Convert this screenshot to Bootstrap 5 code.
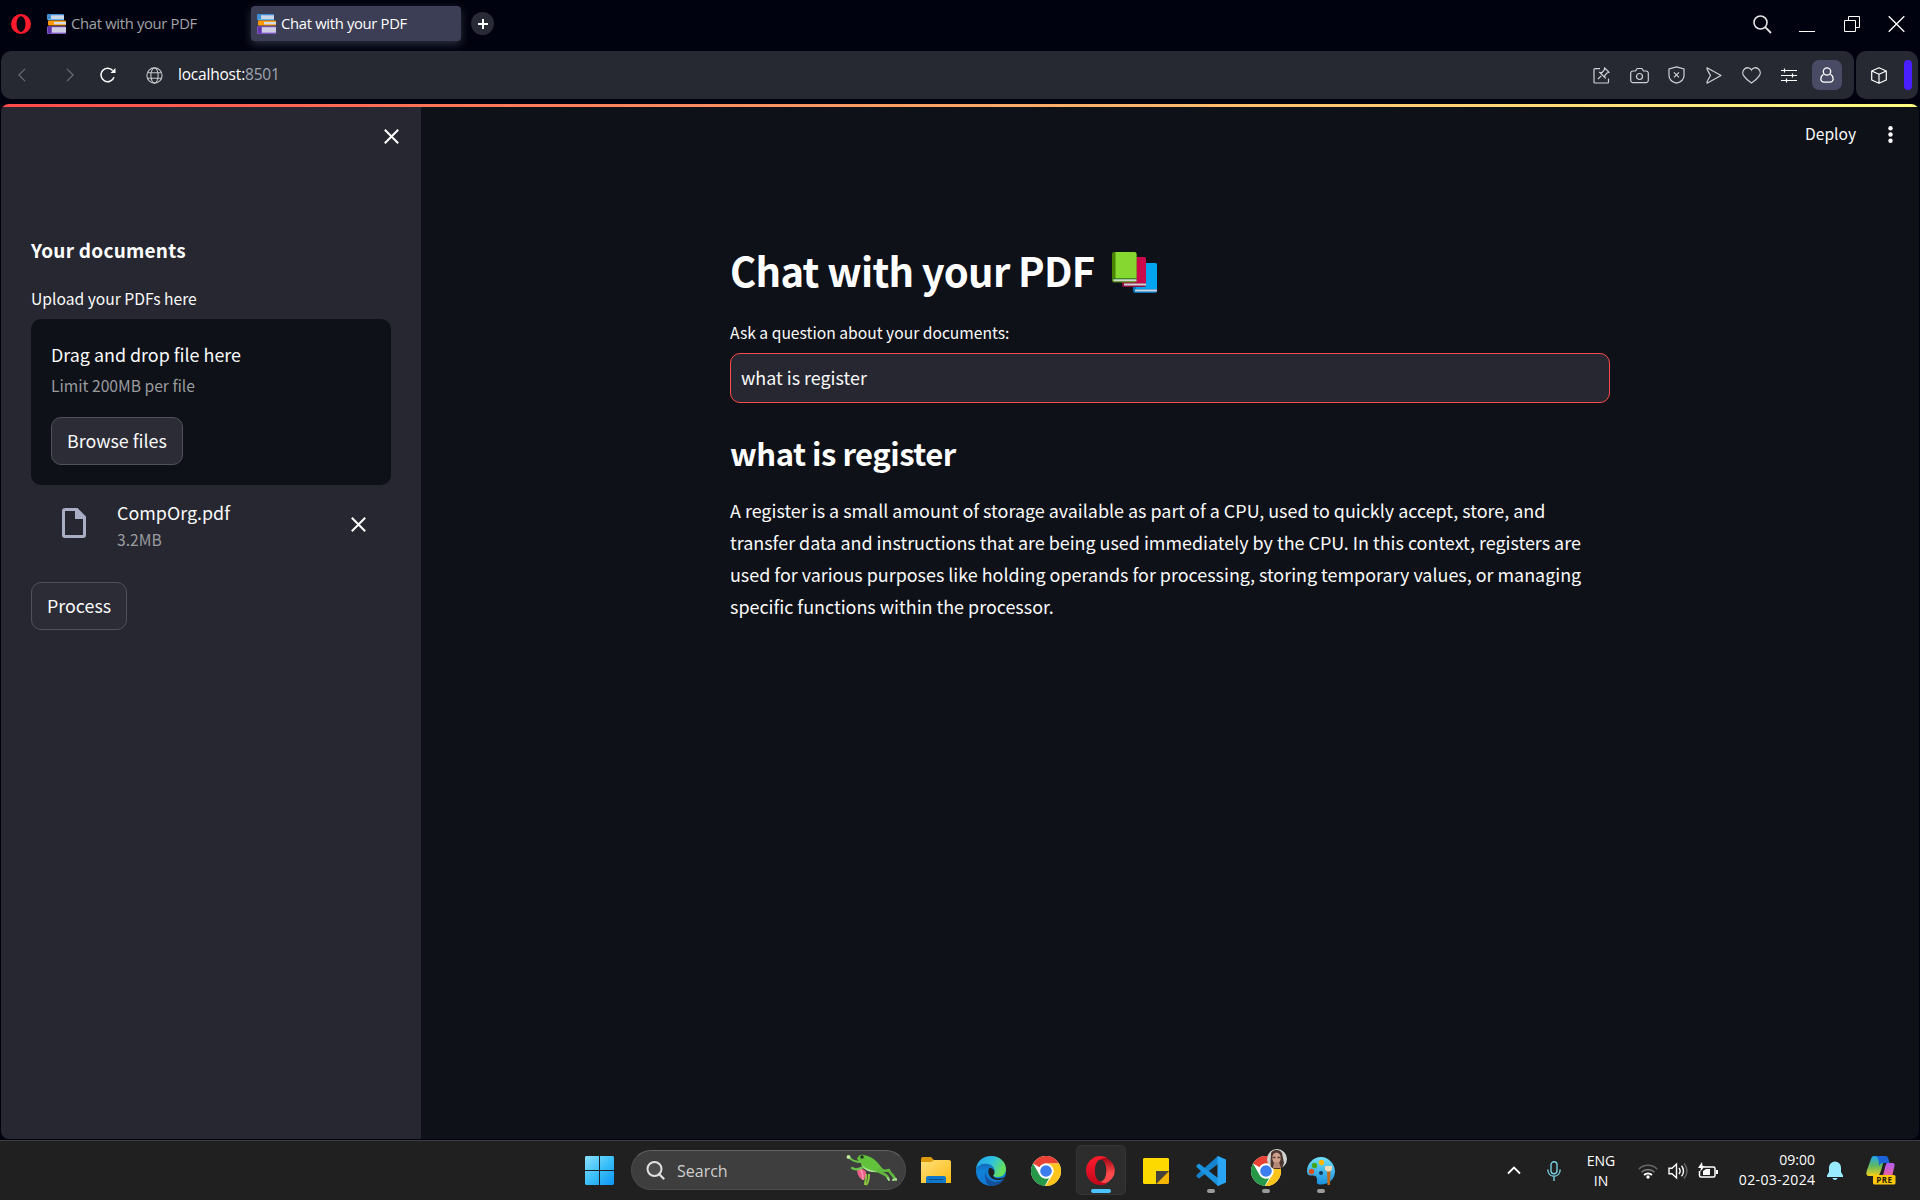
<!DOCTYPE html>
<html lang="en" data-bs-theme="dark">
<head>
<meta charset="utf-8">
<title>Chat with your PDF</title>
<meta name="viewport" content="width=device-width, initial-scale=1">
<link href="https://cdn.jsdelivr.net/npm/bootstrap@5.3.0/dist/css/bootstrap.min.css" rel="stylesheet">
<style>
  html, body { height: 100%; }
  body { background: #00030f; color: #fafafa; overflow: hidden; font-family: "Noto Sans CJK SC", "Noto Sans", sans-serif; }
  svg { display: block; flex: none; }
  .ui { font-family: "Open Sans", "Noto Sans", sans-serif; white-space: nowrap; }
  .tabstrip { height: 51px; padding: 0 15px 0 11px; }
  .o-logo { margin-top: 14px; }
  .tab-item { height: 35px; width: 210px; margin-top: 6px; padding-left: 6px; gap: 5px; font-size: 14.8px; line-height: 26px; border-radius: 4px; color: #a3a4a9; }
  .tab-item:not(.current) { margin-left: 10px; }
  .tab-item span { letter-spacing: -.32px; padding-bottom: 1px; }
  .tab-item.current { background: #3c3e55; color: #fff; box-shadow: 0 3px 9px rgba(90,92,110,.5); }
  .plus { width: 23px; height: 23px; margin: 12px 0 0 10px; background: #282a35; }
  .win-ctl { margin-top: 15px; gap: 27.5px; }
  .bars { padding: 0 2px 0 1px; gap: 2px; }
  .panel { background: #262932; border-radius: 10px; height: 48px; }
  .nav-panel { padding: 0 8.500px 0 17px; }
  .ext-panel { width: 62px; padding: 0 6px 0 15px; }
  .ext-bar { width: 8px; height: 30px; background: #4a1fff; }
  .addr { font-size: 15.500px; margin-left: 15px; letter-spacing: -.2px; }
  .addr .port { color: #9fa5b3; }
  .slot { width: 37.5px; }
  .user-box { width: 30px; height: 30px; background: #494b64; border-radius: 7px; }
  .viewport { margin: 5px 1px 0; height: 1035px; border-radius: 8px; background: #0e1118; overflow: hidden; }
  .rainbow { height: 3px; background: linear-gradient(90deg, #ff4b4b, #fffd80); }
  .side { width: 420px; background: #262730; padding: 22px 30px 0; }
  .side-close { margin-right: -8px; }
  .side h2 { font-size: 19px; line-height: 24px; font-weight: 700; margin: 94px 0 26px; letter-spacing: .25px; }
  .lbl { font-size: 15.65px; line-height: 20px; padding-top: 1px; margin-bottom: -1px; }
  .t-body { font-size: 17.9px; line-height: 24px; }
  .muted-txt { color: #9a9b9f; }
  .dropzone { margin-top: 11px; height: 166px; padding: 23px 20px 0; background: #0e1118; border-radius: 10px; }
  .btn-st { height: 48px; padding: 0 15px 2px; font-size: 17.85px; line-height: 24px; color: #fafafa; background: #2b2c36; border: 1px solid #50515a; border-radius: 10px; }
  .file-row { margin-top: 15px; height: 49px; padding: 0 25px 0 31px; }
  .main-col { width: 880px; margin-left: 309px; padding-top: 136px; }
  .main-col h1 { font-size: 40px; line-height: 54px; font-weight: 700; margin: 0 0 25px; letter-spacing: -.7px; }
  .books { margin: 5px 0 0 17px; }
  .main-col h3 { font-size: 31px; line-height: 38px; font-weight: 700; margin: 31px 0 22px; letter-spacing: -.48px; }
  .main-col p { font-size: 17.91px; line-height: 32px; margin: 0; }
  .form-control.ask { height: 50px; margin-top: 11px; padding: 0 10px 2px; background: #262730; border: 1px solid #ff4b4b; border-radius: 10px; color: #fafafa; font-size: 17.9px; }
  .top-right { width: 114px; padding: 16px 26px 0 0; }
  .taskbar { height: 60px; margin-top: 1px; background: #202020; border-top: 1px solid #3e3e42; padding-left: 572px; }
  .app { width: 55px; height: 59px; position: relative; }
  .app.running::after { content: ""; position: absolute; left: 24px; bottom: 7px; width: 8px; height: 4px; border-radius: 2px; background: #9a9a9a; }
  .app.active-app::before { content: ""; position: absolute; left: 2.5px; top: 4px; width: 50px; height: 50px; border-radius: 5px; background: #2d2d2d; border: 1px solid #353535; }
  .app.active-app::after { content: ""; position: absolute; left: 17.5px; bottom: 7px; width: 20px; height: 4px; border-radius: 2px; background: #4cc2ff; }
  .app svg { position: relative; }
  .app .avatar { position: absolute; left: 28.5px; top: 8px; }
  .searchbox { width: 275px; height: 40px; margin: 0 2px 1px 4px; border-radius: 20px; background: #3e3e3e; border: 1px solid #4b4b4b; border-top-color: #636363; padding: 0 7px 0 14px; }
  .searchbox span { font-size: 16px; margin: 2px 0 0 12px; color: #cfcfcf; }
  .tray { font-size: 14px; line-height: 20px; color: #fff; padding-right: 24px; }
  .lang { margin: 0 22px 0 25px; width: 30px; }
  .clock { margin: -1px 0 0 20px; width: 77px; }
  .clock .date { letter-spacing: .35px; margin-right: -.4px; }
</style>
</head>
<body>
<svg width="0" height="0" class="position-absolute" aria-hidden="true">
  <defs>
    <linearGradient id="win" x1="0" y1="0" x2="1" y2="1"><stop offset="0" stop-color="#8be0ff"/><stop offset=".5" stop-color="#3cc0f8"/><stop offset="1" stop-color="#0c95f5"/></linearGradient>
    <linearGradient id="fold" x1="0" y1="0" x2="1" y2="1"><stop offset="0" stop-color="#ffe17a"/><stop offset="1" stop-color="#fdb913"/></linearGradient>
    <linearGradient id="edgeA" x1="0" y1="0" x2="1" y2=".4"><stop offset="0" stop-color="#1fa0e8"/><stop offset=".55" stop-color="#2fc2df"/><stop offset="1" stop-color="#66e05c"/></linearGradient>
    <linearGradient id="edgeB" x1="0" y1="0" x2="0" y2="1"><stop offset="0" stop-color="#1a4f9c"/><stop offset=".5" stop-color="#0f83d8"/><stop offset="1" stop-color="#1277d4"/></linearGradient>
    <linearGradient id="opA" x1="0" y1="0" x2="0" y2="1"><stop offset="0" stop-color="#ff1b2d"/><stop offset="1" stop-color="#c4061c"/></linearGradient>
    <linearGradient id="opB" x1="0" y1="0" x2="0" y2="1"><stop offset="0" stop-color="#9c0010"/><stop offset=".6" stop-color="#ff4b4b"/><stop offset="1" stop-color="#ff4b4b"/></linearGradient>
    <linearGradient id="cpA" x1="0" y1="0" x2="0" y2="1"><stop offset="0" stop-color="#22a7f0"/><stop offset=".5" stop-color="#5fb85f"/><stop offset="1" stop-color="#f5d21a"/></linearGradient>
    <linearGradient id="cpB" x1="0" y1="0" x2="0" y2="1"><stop offset="0" stop-color="#b45cf0"/><stop offset="1" stop-color="#f0609a"/></linearGradient>
    <linearGradient id="pal" x1="0" y1="0" x2="0" y2="1"><stop offset="0" stop-color="#6fe0fb"/><stop offset="1" stop-color="#1a8fdc"/></linearGradient>
    <symbol id="favicon" viewBox="0 0 19 20">
      <rect x="0" y="0" width="17" height="6" rx="1" fill="#3f8fd2"/><rect x="4" y="1.3" width="13" height="4" fill="#cdd6e6"/><rect x="1" y="5" width="16" height="1.3" fill="#5eb3ee"/>
      <rect x="1" y="6.6" width="18" height="5" rx="1" fill="#ff9800"/><rect x="7" y="7.8" width="12" height="2.6" fill="#d9dbe3"/>
      <rect x="0" y="12.2" width="19" height="7.8" rx="1" fill="#7e57c2"/><rect x="5" y="13.2" width="14" height="5.400" fill="#cfcde4"/><path d="M1 12.800h3v6.500H1z" fill="#5e35a8"/>
    </symbol>
    <symbol id="chrome" viewBox="0 0 48 48">
      <circle cx="24" cy="24" r="24" fill="#fff"/>
      <path d="M3.2 12A24 24 0 0 1 44.8 12L24 12A12 12 0 0 0 13.6 18z" fill="#e94235"/>
      <path d="M44.8 12A24 24 0 0 1 23 48L34.4 30A12 12 0 0 0 34.4 18L24 12z" fill="#fdc41c"/>
      <path d="M3.200 12 13.600 30A12 12 0 0 0 29 35L22 48A24 24 0 0 1 3.200 12z" fill="#279847"/>
      <circle cx="24" cy="24" r="12" fill="#fff"/><circle cx="24" cy="24" r="9.3" fill="#3b7ded"/>
    </symbol>
  </defs>
</svg>

<div class="d-flex flex-column vh-100">
  <header class="tabstrip d-flex ui">
    <svg class="o-logo" width="20" height="20" viewBox="0 0 20 20"><path fill="#ff1b2d" fill-rule="evenodd" d="M10 0a10 10 0 1 0 0 20 10 10 0 0 0 0-20zm0 2.2c2.5 0 4.4 3.400 4.400 7.800s-1.900 7.800-4.400 7.800S5.600 14.400 5.600 10 7.500 2.200 10 2.200z"/></svg>
    <div class="tab-item d-flex align-items-center"><svg width="19" height="20"><use href="#favicon"/></svg><span>Chat with your PDF</span></div>
    <div class="tab-item current d-flex align-items-center"><svg width="19" height="20"><use href="#favicon"/></svg><span>Chat with your PDF</span></div>
    <div class="plus rounded-circle d-flex align-items-center justify-content-center"><svg width="10" height="10"><path d="M5 0v10M0 5h10" stroke="#fff" stroke-width="2"/></svg></div>
    <div class="win-ctl ms-auto d-flex">
      <svg width="19" height="19" viewBox="0 0 19 19" fill="none" stroke="#e4e4e8"><circle cx="7.500" cy="7.500" r="6.500" stroke-width="1.600"/><path d="m12.200 12.200 5.800 5.800" stroke-width="1.800"/></svg>
      <svg width="17" height="18"><path d="M0 16.500h16" stroke="#fff"/></svg>
      <svg width="17" height="18" fill="none" stroke="#fff"><path d="M.5 5.500h11v11H.500zM4.500 5V1.500h11v11H12"/></svg>
      <svg width="17" height="18" fill="none" stroke="#fff" stroke-width="1.300"><path d="m.7 1.200 15.600 15.600M16.300 1.200.7 16.800"/></svg>
    </div>
  </header>

  <nav class="bars d-flex ui">
    <div class="panel nav-panel flex-grow-1 d-flex align-items-center">
      <svg width="8" height="14" fill="none" stroke="#6b6d77" stroke-width="1.200"><path d="M7 .8.9 7 7 13.200"/></svg>
      <svg width="8" height="14" fill="none" stroke="#6b6d77" stroke-width="1.200" style="margin-left:39.500px"><path d="M1 .8 7.100 7 1 13.200"/></svg>
      <svg width="16" height="16" viewBox="0 0 16 16" fill="none" stroke="#fff" stroke-width="1.500" style="margin-left:26px"><path d="M14 10.200A6.700 6.700 0 1 1 12.700 3.500"/><path d="M15.500 1v5h-5z" fill="#fff" stroke="none"/></svg>
      <svg width="17" height="17" viewBox="0 0 17 17" fill="none" stroke="#c5c6ca" stroke-width="1.100" style="margin-left:30.500px"><circle cx="8.500" cy="8.500" r="7.600"/><ellipse cx="8.500" cy="8.500" rx="3.600" ry="7.600"/><path d="M1.700 5.700h13.600M1.700 11.300h13.600"/></svg>
      <div class="addr text-white">localhost:<span class="port">8501</span></div>
      <div class="ms-auto d-flex align-items-center">
        <div class="slot"><svg class="mx-auto" width="17" height="17" viewBox="0 0 17 17" fill="none" stroke="#d0d1d5" stroke-width="1.200"><path d="M7 1.600H2a1 1 0 0 0-1 1V15a1 1 0 0 0 1 1h12.500a1 1 0 0 0 1-1v-3.500"/><path d="m5 12 3.200-3.200M11.700 1l4.300 4.300-2 .7-2.200 2.400.2 2.200L6.800 5.400l2.200.2L11.200 3z"/></svg></div>
        <div class="slot"><svg class="mx-auto" width="19" height="17" viewBox="0 0 19 17" fill="none" stroke="#d0d1d5" stroke-width="1.200"><path d="M3 4h2.500l1.600-2.500h4.800L13.500 4H16a2.300 2.300 0 0 1 2.300 2.300v7A2.300 2.300 0 0 1 16 15.600H3A2.300 2.300 0 0 1 .7 13.300v-7A2.300 2.300 0 0 1 3 4z"/><circle cx="9.500" cy="9.500" r="3"/></svg></div>
        <div class="slot"><svg class="mx-auto" width="17" height="18" viewBox="0 0 17 18" fill="none" stroke="#d0d1d5" stroke-width="1.200"><path d="M8.500.8 16 3v6.500c0 3.800-3.200 6.500-7.500 7.700C4.200 16 1 13.300 1 9.500V3z"/><path d="m6 6.300 5 5M11 6.300l-5 5"/></svg></div>
        <div class="slot"><svg class="mx-auto" width="16" height="17" viewBox="0 0 16 17" fill="none" stroke="#d0d1d5" stroke-width="1.200" stroke-linejoin="round"><path d="M1.500 1 15 8.500 1.500 16C.2 16.500 1 14.500 4.500 8.500 1 2.500.2.500 1.500 1z"/></svg></div>
        <div class="slot"><svg class="mx-auto" width="19" height="17" viewBox="0 0 19 17" fill="none" stroke="#d0d1d5" stroke-width="1.300"><path d="M9.500 3C8 .4 4.800.2 2.800 1.700.3 3.700.3 7 2 9.200 4 12 6.500 14.300 9.500 16c3-1.700 5.500-4 7.500-6.800 1.700-2.200 1.700-5.500-.8-7.500C14.200.2 11 .4 9.500 3z"/></svg></div>
        <div class="slot"><svg class="mx-auto" width="16" height="15" viewBox="0 0 16 15" fill="none" stroke="#fff" stroke-width="1.200"><path d="M0 2.500h16M0 7.500h16M0 12.500h16M3.500.5v4M11.500 5.500v4M5.500 10.500v4"/></svg></div>
        <div class="slot"><div class="user-box mx-auto d-flex align-items-center justify-content-center"><svg width="14" height="16" viewBox="0 0 14 16" fill="none" stroke="#fff" stroke-width="1.300"><circle cx="7" cy="4.500" r="3.700"/><path d="M3.500 7.300C1.500 8.500.7 10.500.9 12.500c.3 1.800 1.300 2.600 3 2.600h6.200c1.700 0 2.700-.8 3-2.600.2-2-.6-4-2.600-5.200"/></svg></div></div>
      </div>
    </div>
    <div class="panel ext-panel d-flex align-items-center">
      <svg width="16" height="17" viewBox="0 0 16 17" fill="none" stroke="#fff" stroke-width="1.200" stroke-linejoin="round"><path d="M8 .8 15.300 4v9L8 16.200.7 13V4zM.7 4 8 7.300 15.300 4M8 7.300v9"/></svg>
      <div class="ext-bar ms-auto rounded-pill"></div>
    </div>
  </nav>

  <main class="viewport d-flex flex-column">
    <div class="rainbow"></div>
    <div class="d-flex flex-grow-1">
      <aside class="side d-flex flex-column">
        <svg class="side-close ms-auto" width="15" height="15" fill="none" stroke="#fff" stroke-width="2"><path d="m.8.800 13.400 13.400M14.200.8.800 14.200"/></svg>
        <h2>Your documents</h2>
        <div class="lbl">Upload your PDFs here</div>
        <section class="dropzone">
          <div class="t-body">Drag and drop file here</div>
          <div class="lbl muted-txt" style="margin-top:9px">Limit 200MB per file</div>
          <button class="btn btn-st" style="margin-top:22px">Browse files</button>
        </section>
        <div class="file-row d-flex">
          <svg width="24" height="30" viewBox="0 0 24 30" style="margin-top:8px"><path fill="#a9aec4" fill-rule="evenodd" d="M3 0h12.500L24 8.500V27a3 3 0 0 1-3 3H3a3 3 0 0 1-3-3V3a3 3 0 0 1 3-3zm0 3v24h18V11h-8V3z"/></svg>
          <div style="margin-left:31px"><div class="t-body">CompOrg.pdf</div><div class="lbl muted-txt" style="margin-top:5px">3.2MB</div></div>
          <svg class="ms-auto" width="15" height="15" style="margin-top:17px" fill="none" stroke="#fff" stroke-width="2"><path d="m.8.800 13.400 13.400M14.200.8.800 14.200"/></svg>
        </div>
        <button class="btn btn-st align-self-start" style="margin-top:33px">Process</button>
      </aside>

      <section class="flex-grow-1 d-flex">
        <div class="main-col">
          <h1 class="d-flex align-items-center">Chat with your PDF
            <svg class="books" width="45" height="41" viewBox="0 0 45 41">
              <rect x="21" y="11" width="24" height="30" rx="2" fill="#0571b8"/><path d="M24 11h19a2 2 0 0 1 2 2v24H24z" fill="#00a4ef"/><rect x="23" y="37.500" width="22" height="2" fill="#cfd6dd"/>
              <rect x="10" y="5" width="24" height="30" rx="2" fill="#8e0f3d"/><path d="M13 5h19a2 2 0 0 1 2 2v24H13z" fill="#cb0a4b"/><rect x="12" y="31.500" width="22" height="2" fill="#d6d3d8"/>
              <rect x="0" y="0" width="24.500" height="30.500" rx="2" fill="#498205"/><path d="M3.500 0h19a2 2 0 0 1 2 2v24.500h-21z" fill="#86d72f"/><path d="M1 26.500h23.500v1H1z" fill="#0c6b3a"/><rect x="1.500" y="27.300" width="23" height="2" fill="#d5dbd0"/>
            </svg>
          </h1>
          <div class="lbl">Ask a question about your documents:</div>
          <div class="form-control ask d-flex align-items-center">what is register</div>
          <h3>what is register</h3>
          <p>A register is a small amount of storage available as part of a CPU, used to quickly accept, store, and<br>transfer data and instructions that are being used immediately by the CPU. In this context, registers are<br>used for various purposes like holding operands for processing, storing temporary values, or managing<br>specific functions within the processor.</p>
        </div>
        <div class="ms-auto d-flex align-items-start top-right">
          <div class="lbl">Deploy</div>
          <svg class="ms-auto" width="5" height="17" fill="#fff" style="margin-top:3px"><circle cx="2.500" cy="2.300" r="2.200"/><circle cx="2.500" cy="8.500" r="2.200"/><circle cx="2.500" cy="14.700" r="2.200"/></svg>
        </div>
      </section>
    </div>
  </main>

  <footer class="taskbar d-flex align-items-center ui">
    <div class="app d-flex align-items-center justify-content-center"><svg width="29" height="29" fill="url(#win)" viewBox="0 0 29 29"><path d="M1 0h13v14H0V1zM15 0h13l1 1v13H15zM0 15h14v14H1l-1-1zM15 15h14v13l-1 1H15z"/></svg></div>
    <div class="searchbox d-flex align-items-center">
      <svg width="19" height="19" viewBox="0 0 19 19" stroke="#e0e0e0" fill="#4d4d4d"><circle cx="8.500" cy="8" r="7" stroke-width="2"/><path d="m13 13 4.500 4.500" stroke-width="2.300" stroke-linecap="round"/></svg>
      <span>Search</span>
      <svg class="ms-auto" width="52" height="32" viewBox="0 0 52 32" fill="none">
        <path d="M19 31c0-5 2-8 1-11M20 31c2-2 3-6 3-11" stroke="#8ac63f" stroke-width="2"/><path d="M11 15c3-1 8 0 9 3 0 4-1 7-3 8-4-2-6-6-6-11z" fill="#f0618a"/><path d="M14 15c2 2 3 6 3 11" stroke="#ff9ab4" stroke-width="1.500"/>
        <path d="M16 8C9 8 5 6 3 3M19 12c-6 4-10 4-13 2" stroke="#6cc24a" stroke-width="2.200" stroke-linecap="round"/><circle cx="2.500" cy="3" r="2" fill="#bfe39d"/>
        <path d="M11 5c1-4 4-5 7-4 5 1 9 3 12 6 4 4 6 8 9 9-4 3-10 3-15 1-5-1-9-3-9-8z" fill="#62c23c"/><path d="M16 11c4 4 10 6 15 6-4 2-12 1-15-6z" fill="#b6e6a0"/>
        <path d="M33 15c4 3 7 2 10 1 0 3 4 4 6 9M32 17c4 3 8 2 10 7" stroke="#62b83e" stroke-width="2.600" stroke-linecap="round" stroke-linejoin="round"/><path d="m42 24 1 2m6-1-2 1m3-1v1" stroke="#a9db8c" stroke-width="2" stroke-linecap="round"/><circle cx="16" cy="3" r="1.800" fill="#22331d"/>
      </svg>
    </div>
    <div class="app d-flex align-items-center justify-content-center"><svg width="30" height="27" viewBox="0 0 30 27"><path d="M0 2a2 2 0 0 1 2-2h8l3 3h15v6H0z" fill="#dd9a0c"/><path d="M0 5h10l3-2h15a2 2 0 0 1 2 2v21H0z" fill="url(#fold)"/><path d="M5 26v-5a2 2 0 0 1 2-2h16a2 2 0 0 1 2 2v5z" fill="#0f78c8"/><path d="M8 22.500h14" stroke="#0a4d8c"/></svg></div>
    <div class="app d-flex align-items-center justify-content-center"><svg width="30" height="30" viewBox="0 0 30 30"><circle cx="15" cy="15" r="15" fill="url(#edgeB)"/><path d="M0 13C1 5 7 0 15 0c9 0 15 6 15 13 0 5-4 8-8 8-5 0-6-2-4-4 2-4-1-8-6-9C6 7 2 9 0 13z" fill="url(#edgeA)"/><path d="M12 12c-3 3-3 9 2 12 4 3 10 2 14-1-3 5-8 7-13 7C9 29 7 17 12 12z" fill="#13509c"/><path d="M30 20.500c-5 2.500-11 2.500-12.500 0-1-1 1-2 1-4 0-3-3-5-5-4.500-3 4 0 10 5 11.500 4 1 7 .500 9.500-1z" fill="#202020"/></svg></div>
    <div class="app d-flex align-items-center justify-content-center"><svg width="30" height="30"><use href="#chrome"/></svg></div>
    <div class="app active-app d-flex align-items-center justify-content-center"><svg width="29" height="29" viewBox="0 0 29 29"><path fill="url(#opB)" d="M9 5C12 1 17 0 22 3c9 6 9 17 0 23-5 3-10 2-13-2z"/><path fill="url(#opA)" fill-rule="evenodd" d="M14.500 0a14.500 14.500 0 1 0 0 29c3 0 5.500-1 7.700-2.600-6 2.500-12.200-2.400-12.200-11.900S16.200 0 22.200 2.600A14 14 0 0 0 14.500 0z"/><ellipse cx="14.600" cy="14.500" rx="5.800" ry="11" fill="#2d2d2d"/></svg></div>
    <div class="app d-flex align-items-center justify-content-center"><svg width="26" height="26"><path d="M1 0h24l1 1v12L13 26H1l-1-1V1z" fill="#fdd900"/><path d="M26 13v12l-1 1H13z" fill="#f5b400"/><path d="M13 26V13h13z" fill="#45423c"/></svg></div>
    <div class="app running d-flex align-items-center justify-content-center"><svg width="30" height="30" viewBox="0 0 30 30"><path d="M22 8 3 22.500.5 20.500V19L22 0z" fill="#1584cf"/><path d="M22 22 3 7.500.5 9.500V11L22 30z" fill="#1b94e0"/><path d="M22 0l8 3.500v23L22 30c-1 0-.5-1-.5-2V2c0-1-.5-2 .5-2z" fill="#2aa5f3"/></svg></div>
    <div class="app running d-flex align-items-center justify-content-center"><svg width="30" height="30"><use href="#chrome"/></svg>
      <svg class="avatar" width="20" height="20" viewBox="0 0 20 20"><circle cx="10" cy="10" r="10" fill="#cfd3d2"/><path d="M4 4C6 0 13 0 15 4l2 10-2 5a10 10 0 0 1-11-1c-1-4 0-10 0-14z" fill="#4b3630"/><ellipse cx="9.500" cy="9" rx="4.300" ry="5.500" fill="#cfa08c"/><path d="M5.500 8.500h3m2 0h3" stroke="#5d4038" stroke-width="1.500"/><path d="M7 13h5l2 6H6z" fill="#b78877"/></svg></div>
    <div class="app running d-flex align-items-center justify-content-center"><svg width="28" height="28" viewBox="0 0 28 28"><path d="M14 0C6 0 0 7 0 14c0 4 2 5 5 4.500s5 .5 5 4-1 5 4 5c8 0 14-6 14-13S22 0 14 0z" fill="url(#pal)"/><circle cx="14" cy="16" r="2" fill="#123c56"/><circle cx="4.500" cy="14.500" r="2.700" fill="#d9531e"/><circle cx="7.500" cy="8.500" r="2.700" fill="#44a51c"/><circle cx="14.500" cy="5.500" r="2.700" fill="#ffb900"/><path d="M20 14h3.500l-.5 13.500a1.200 1.200 0 0 1-2.500 0z" fill="#c06a1c"/><path d="M18 9h7v3.500l-2 2h-3l-2-2z" fill="#ecd9b8"/></svg></div>

    <div class="tray ms-auto d-flex align-items-center">
      <svg width="14" height="9" fill="none" stroke="#fff" stroke-width="1.800"><path d="m1 7.500 6-6 6 6"/></svg>
      <svg width="14" height="20" viewBox="0 0 14 20" fill="none" stroke="#76cfe0" stroke-width="1.400" style="margin-left:26px"><rect x="4" y=".8" width="6" height="12" rx="3"/><path d="M.8 8.500c0 4 2.500 6.700 6.200 6.700s6.200-2.700 6.200-6.700M7 15.200V20"/></svg>
      <div class="lang text-center">ENG<br>IN</div>
      <svg width="20" height="16" viewBox="0 0 20 16" fill="none" stroke="#fff" stroke-width="1.600"><path d="M.7 6.200a13 13 0 0 1 18.600 0" stroke="#666"/><path d="M3.500 9.300a9.300 9.300 0 0 1 13 0" stroke="#777"/><path d="M6 12a6 6 0 0 1 8 0" stroke-width="1.800"/><circle cx="10" cy="14" r="1.700" fill="#fff" stroke="none"/></svg>
      <svg width="20" height="18" viewBox="0 0 20 18" fill="none" stroke="#fff" stroke-width="1.400" style="margin-left:10px"><path d="M1 6.200h3L8.500 2v14L4 11.800H1z"/><path d="M11 6c1.300 1.700 1.300 4.300 0 6M13.500 3.700c2.700 3 2.700 7.600 0 10.600"/><path d="M16 1.500c4 4.500 4 10.500 0 15" stroke="#666"/></svg>
      <svg width="20" height="17" viewBox="0 0 20 17" fill="none" stroke="#fff" stroke-width="1.500" style="margin-left:10px"><path d="M6 5h9.500a1.500 1.500 0 0 1 1.500 1.500v7a1.500 1.500 0 0 1-1.500 1.500H3a1.500 1.500 0 0 1-1.500-1.500V9"/><path d="M5 13V9l3-2h4v6z" fill="#fff" stroke="none"/><path d="M18 8v4h2V8zM4 0 0 6h3L2 10l5-6H4.500z" fill="#fff" stroke="none"/></svg>
      <div class="clock text-end">09:00<br><span class="date">02-03-2024</span></div>
      <svg width="16" height="20" viewBox="0 0 16 20" fill="#99ebff" style="margin-left:12px"><path d="M8 .5A6 6 0 0 0 2 6.500V11L0 14.500V16h16v-1.500L14 11V6.500a6 6 0 0 0-6-6zM5.500 17h5c-.5 2.500-4.500 2.500-5 0z"/></svg>
      <svg width="30" height="29" viewBox="0 0 30 29" style="margin-left:23px"><path d="M8 0h12c-3 3-4 17-8 20H3c-3 0-3-3-2-6L5 3C5.500 1 6.500 0 8 0z" fill="url(#cpA)"/><path d="M8 0h11c2 0 3 1 3.500 3l1 4H17c-2 0-3 1-4 3C13 3 12 0 8 0z" fill="#1b63d8"/><path d="M16 20c3-3 2-10 5-13h5c3 0 3 2 2 5l-2 9z" fill="url(#cpB)"/><rect x="7" y="19" width="22.500" height="9.500" rx="1.500" fill="#ffc60a"/><text x="18.300" y="26.700" font-size="8" font-weight="700" text-anchor="middle" font-family="Open Sans, sans-serif" fill="#1e1a0b" letter-spacing=".4">PRE</text></svg>
    </div>
  </footer>
</div>
<script src="https://cdn.jsdelivr.net/npm/bootstrap@5.3.0/dist/js/bootstrap.bundle.min.js"></script>
</body>
</html>
